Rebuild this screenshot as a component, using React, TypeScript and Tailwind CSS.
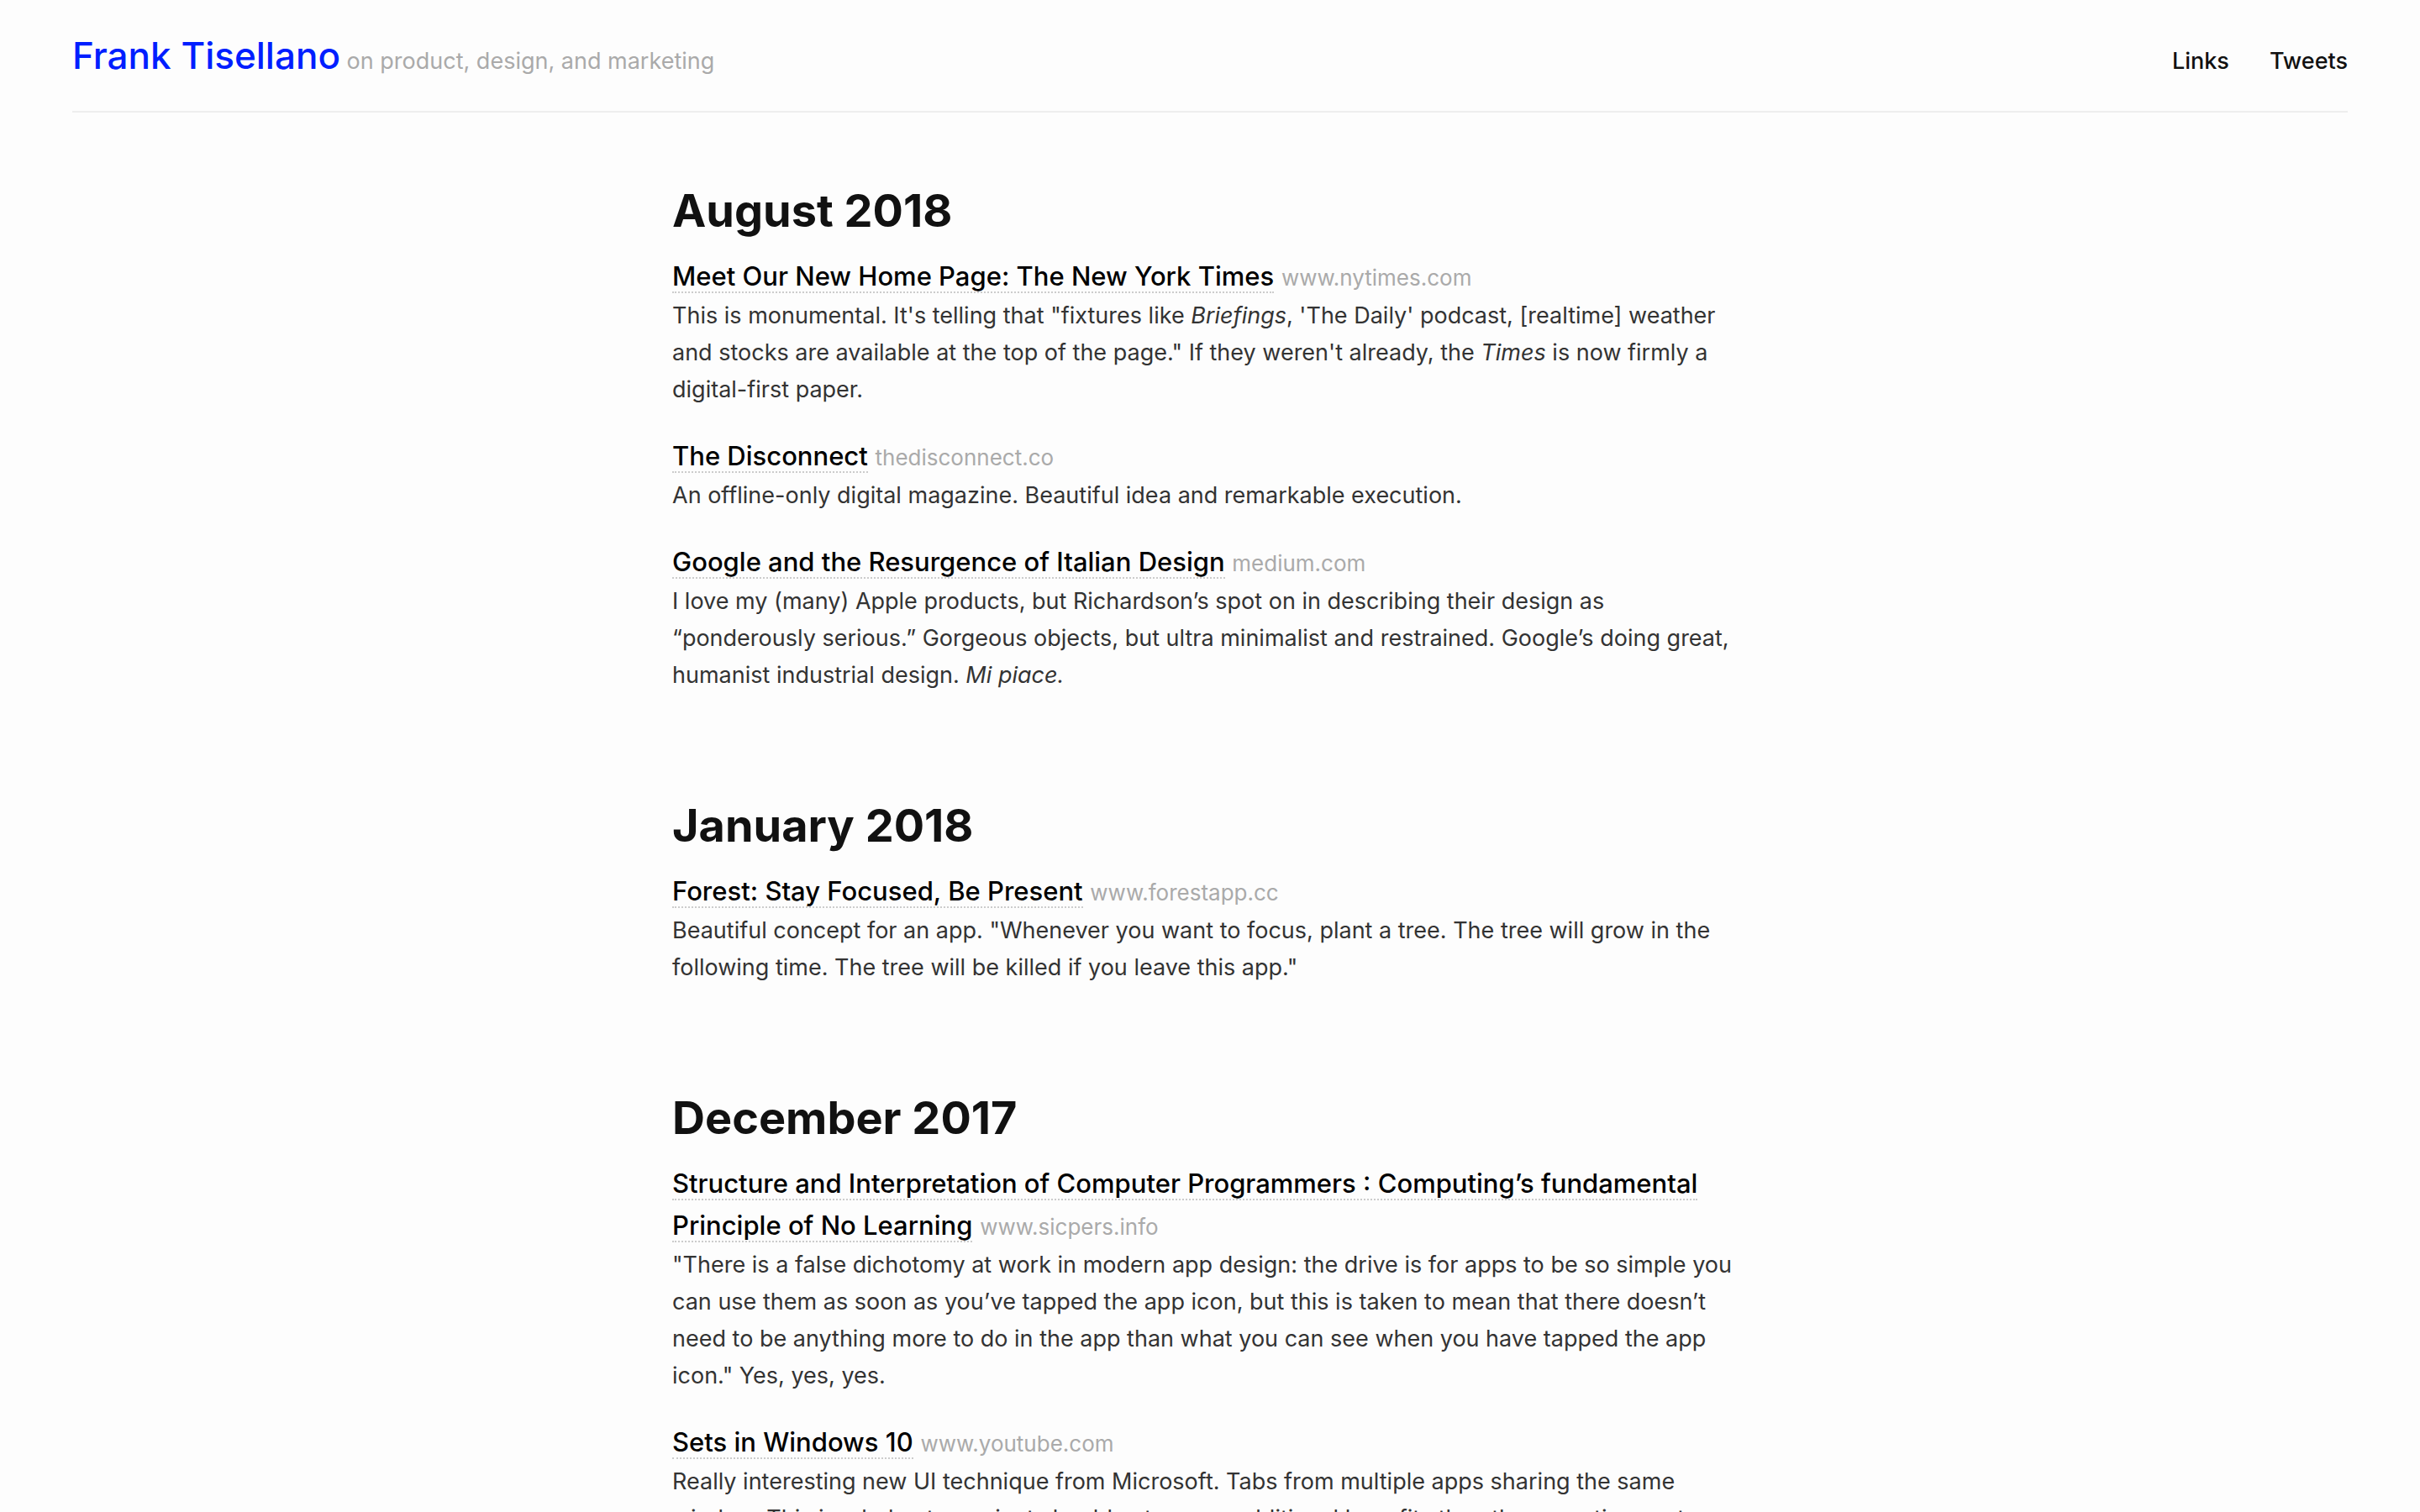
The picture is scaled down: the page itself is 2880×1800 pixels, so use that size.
import type { ReactNode } from "react";

type Item = { title: string; host: string; body: ReactNode };
type Month = { name: string; items: Item[] };

const months: Month[] = [
  {
    name: "August 2018",
    items: [
      {
        title: "Meet Our New Home Page: The New York Times",
        host: "www.nytimes.com",
        body: (
          <>
            This is monumental. It's telling that "fixtures like <em>Briefings</em>, 'The Daily' podcast, [realtime]
            weather and stocks are available at the top of the page." If they weren't already, the <em>Times</em> is
            now firmly a digital-first paper.
          </>
        ),
      },
      {
        title: "The Disconnect",
        host: "thedisconnect.co",
        body: "An offline-only digital magazine. Beautiful idea and remarkable execution.",
      },
      {
        title: "Google and the Resurgence of Italian Design",
        host: "medium.com",
        body: (
          <>
            I love my (many) Apple products, but Richardson’s spot on in describing their design as “ponderously
            serious.” Gorgeous objects, but ultra minimalist and restrained. Google’s doing great, humanist industrial
            design. <em>Mi piace.</em>
          </>
        ),
      },
    ],
  },
  {
    name: "January 2018",
    items: [
      {
        title: "Forest: Stay Focused, Be Present",
        host: "www.forestapp.cc",
        body: 'Beautiful concept for an app. "Whenever you want to focus, plant a tree. The tree will grow in the following time. The tree will be killed if you leave this app."',
      },
    ],
  },
  {
    name: "December 2017",
    items: [
      {
        title: "Structure and Interpretation of Computer Programmers : Computing’s fundamental Principle of No Learning",
        host: "www.sicpers.info",
        body: "\"There is a false dichotomy at work in modern app design: the drive is for apps to be so simple you can use them as soon as you’ve tapped the app icon, but this is taken to mean that there doesn’t need to be anything more to do in the app than what you can see when you have tapped the app icon.\" Yes, yes, yes.",
      },
      {
        title: "Sets in Windows 10",
        host: "www.youtube.com",
        body: "Really interesting new UI technique from Microsoft. Tabs from multiple apps sharing the same window. This is a help at a project should extra gear additional benefits than the operating system.",
      },
    ],
  },
];

export default function App() {
  return (
    <div className="h-screen overflow-hidden bg-[#fdfdfd] px-[86px] font-['Inter',sans-serif] text-[27px] leading-[44px] text-[#333]">
      <header className="flex items-baseline justify-between border-b-2 border-[#eee] py-[35px]">
        <div className="text-[#aaa]">
          <a href="#home" className="text-[44px] leading-[62px] font-medium text-[#001eff]">
            Frank Tisellano
          </a>{" "}
          on product, design, and marketing
        </div>
        <nav className="flex gap-12 font-medium text-[#111]">
          <a href="#links">Links</a>
          <a href="#tweets">Tweets</a>
        </nav>
      </header>
      <main className="mx-auto max-w-[1280px] pt-[82px]">
        {months.map((month) => (
          <section key={month.name} className="mb-[122px]">
            <h1 className="mb-[18px] text-[54px] leading-[70px] font-bold text-[#111]">{month.name}</h1>
            <div className="flex flex-col gap-8">
              {month.items.map((item) => (
                <article key={item.title}>
                  <h2 className="text-[31px] leading-[50px]">
                    <a href="#link" className="border-b-2 border-dotted border-[#ccc] font-medium text-black">
                      {item.title}
                    </a>{" "}
                    <span className="text-[26px] leading-none text-[#aaa]">{item.host}</span>
                  </h2>
                  <p>{item.body}</p>
                </article>
              ))}
            </div>
          </section>
        ))}
      </main>
    </div>
  );
}
